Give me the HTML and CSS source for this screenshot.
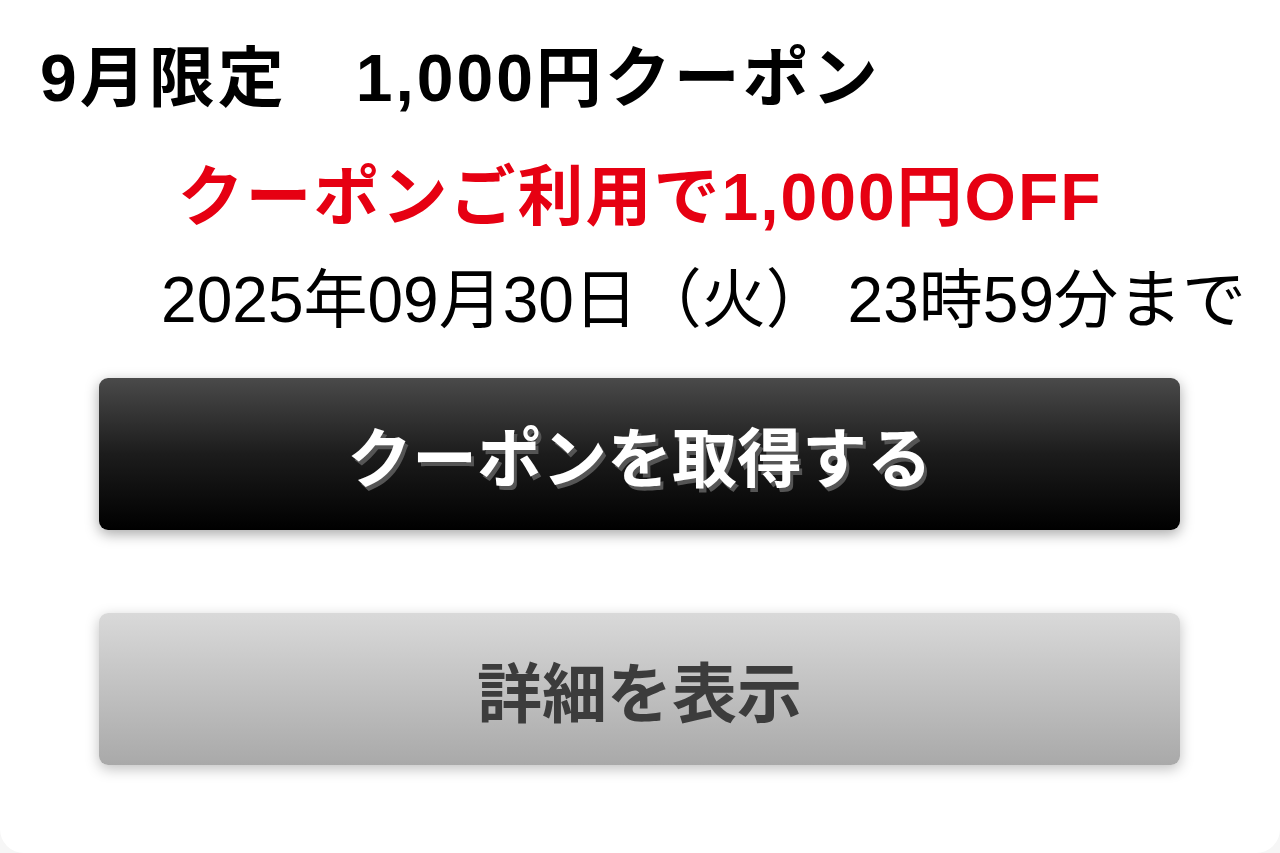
FILE: index.html
```html
<!DOCTYPE html>
<html lang="ja">
<head>
    <meta charset="utf-8">
    <title>9月限定 1,000円クーポン</title>
    <link rel="stylesheet" href="styles.css">
</head>
<body>
    <div class="coupon-card">
        <h1 class="coupon-title">9月限定　1,000円クーポン</h1>
        <p class="coupon-offer">クーポンご利用で1,000円OFF</p>
        <p class="coupon-limit">2025年09月30日（火） 23時59分まで</p>

        <div class="coupon-actions">
            <a href="#" class="btn btn-get">クーポンを取得する</a>
            <a href="#" class="btn btn-detail">詳細を表示</a>
        </div>
    </div>
</body>
</html>
```

FILE: styles.css
```css
body {
    background-color: #f6f6f6;
    font-family: "Liberation Sans", "Noto Sans CJK JP", sans-serif;
    margin: 0;
}

.coupon-card {
    background-color: #fff;
    border-radius: 0 0 24px 24px;
    min-height: 853px;
    padding: 39px 0 0;
    box-sizing: border-box;
}

.coupon-title {
    font-size: 66px;
    font-weight: bold;
    line-height: 78px;
    letter-spacing: 3px;
    color: #000;
    margin: 0;
    padding-left: 40px;
}

.coupon-offer {
    font-size: 66px;
    font-weight: bold;
    line-height: 78px;
    letter-spacing: 2px;
    color: #e60012;
    text-align: center;
    margin: 41px 0 0;
}

.coupon-limit {
    font-size: 64px;
    line-height: 78px;
    color: #000;
    text-align: right;
    margin: 25px 0 0;
    padding-right: 34px;
}

.coupon-actions {
    display: flex;
    flex-direction: column;
    gap: 83px;
    margin: 39px 100px 0 99px;
}

.btn {
    display: flex;
    align-items: center;
    justify-content: center;
    height: 152px;
    border-radius: 9px;
    font-size: 65px;
    font-weight: bold;
    text-decoration: none;
}

.btn-get {
    background: linear-gradient(to bottom, #4a4a4a 0%, #1c1c1c 50%, #000 100%);
    color: #fff;
    text-shadow: 3px 4px 0 #555;
    box-shadow: 0 4px 14px rgba(0, 0, 0, 0.35);
}

.btn-detail {
    background: linear-gradient(to bottom, #d9d9d9 0%, #a9a9a9 100%);
    color: #3c3c3c;
    box-shadow: 0 4px 14px rgba(0, 0, 0, 0.25);
}
```
